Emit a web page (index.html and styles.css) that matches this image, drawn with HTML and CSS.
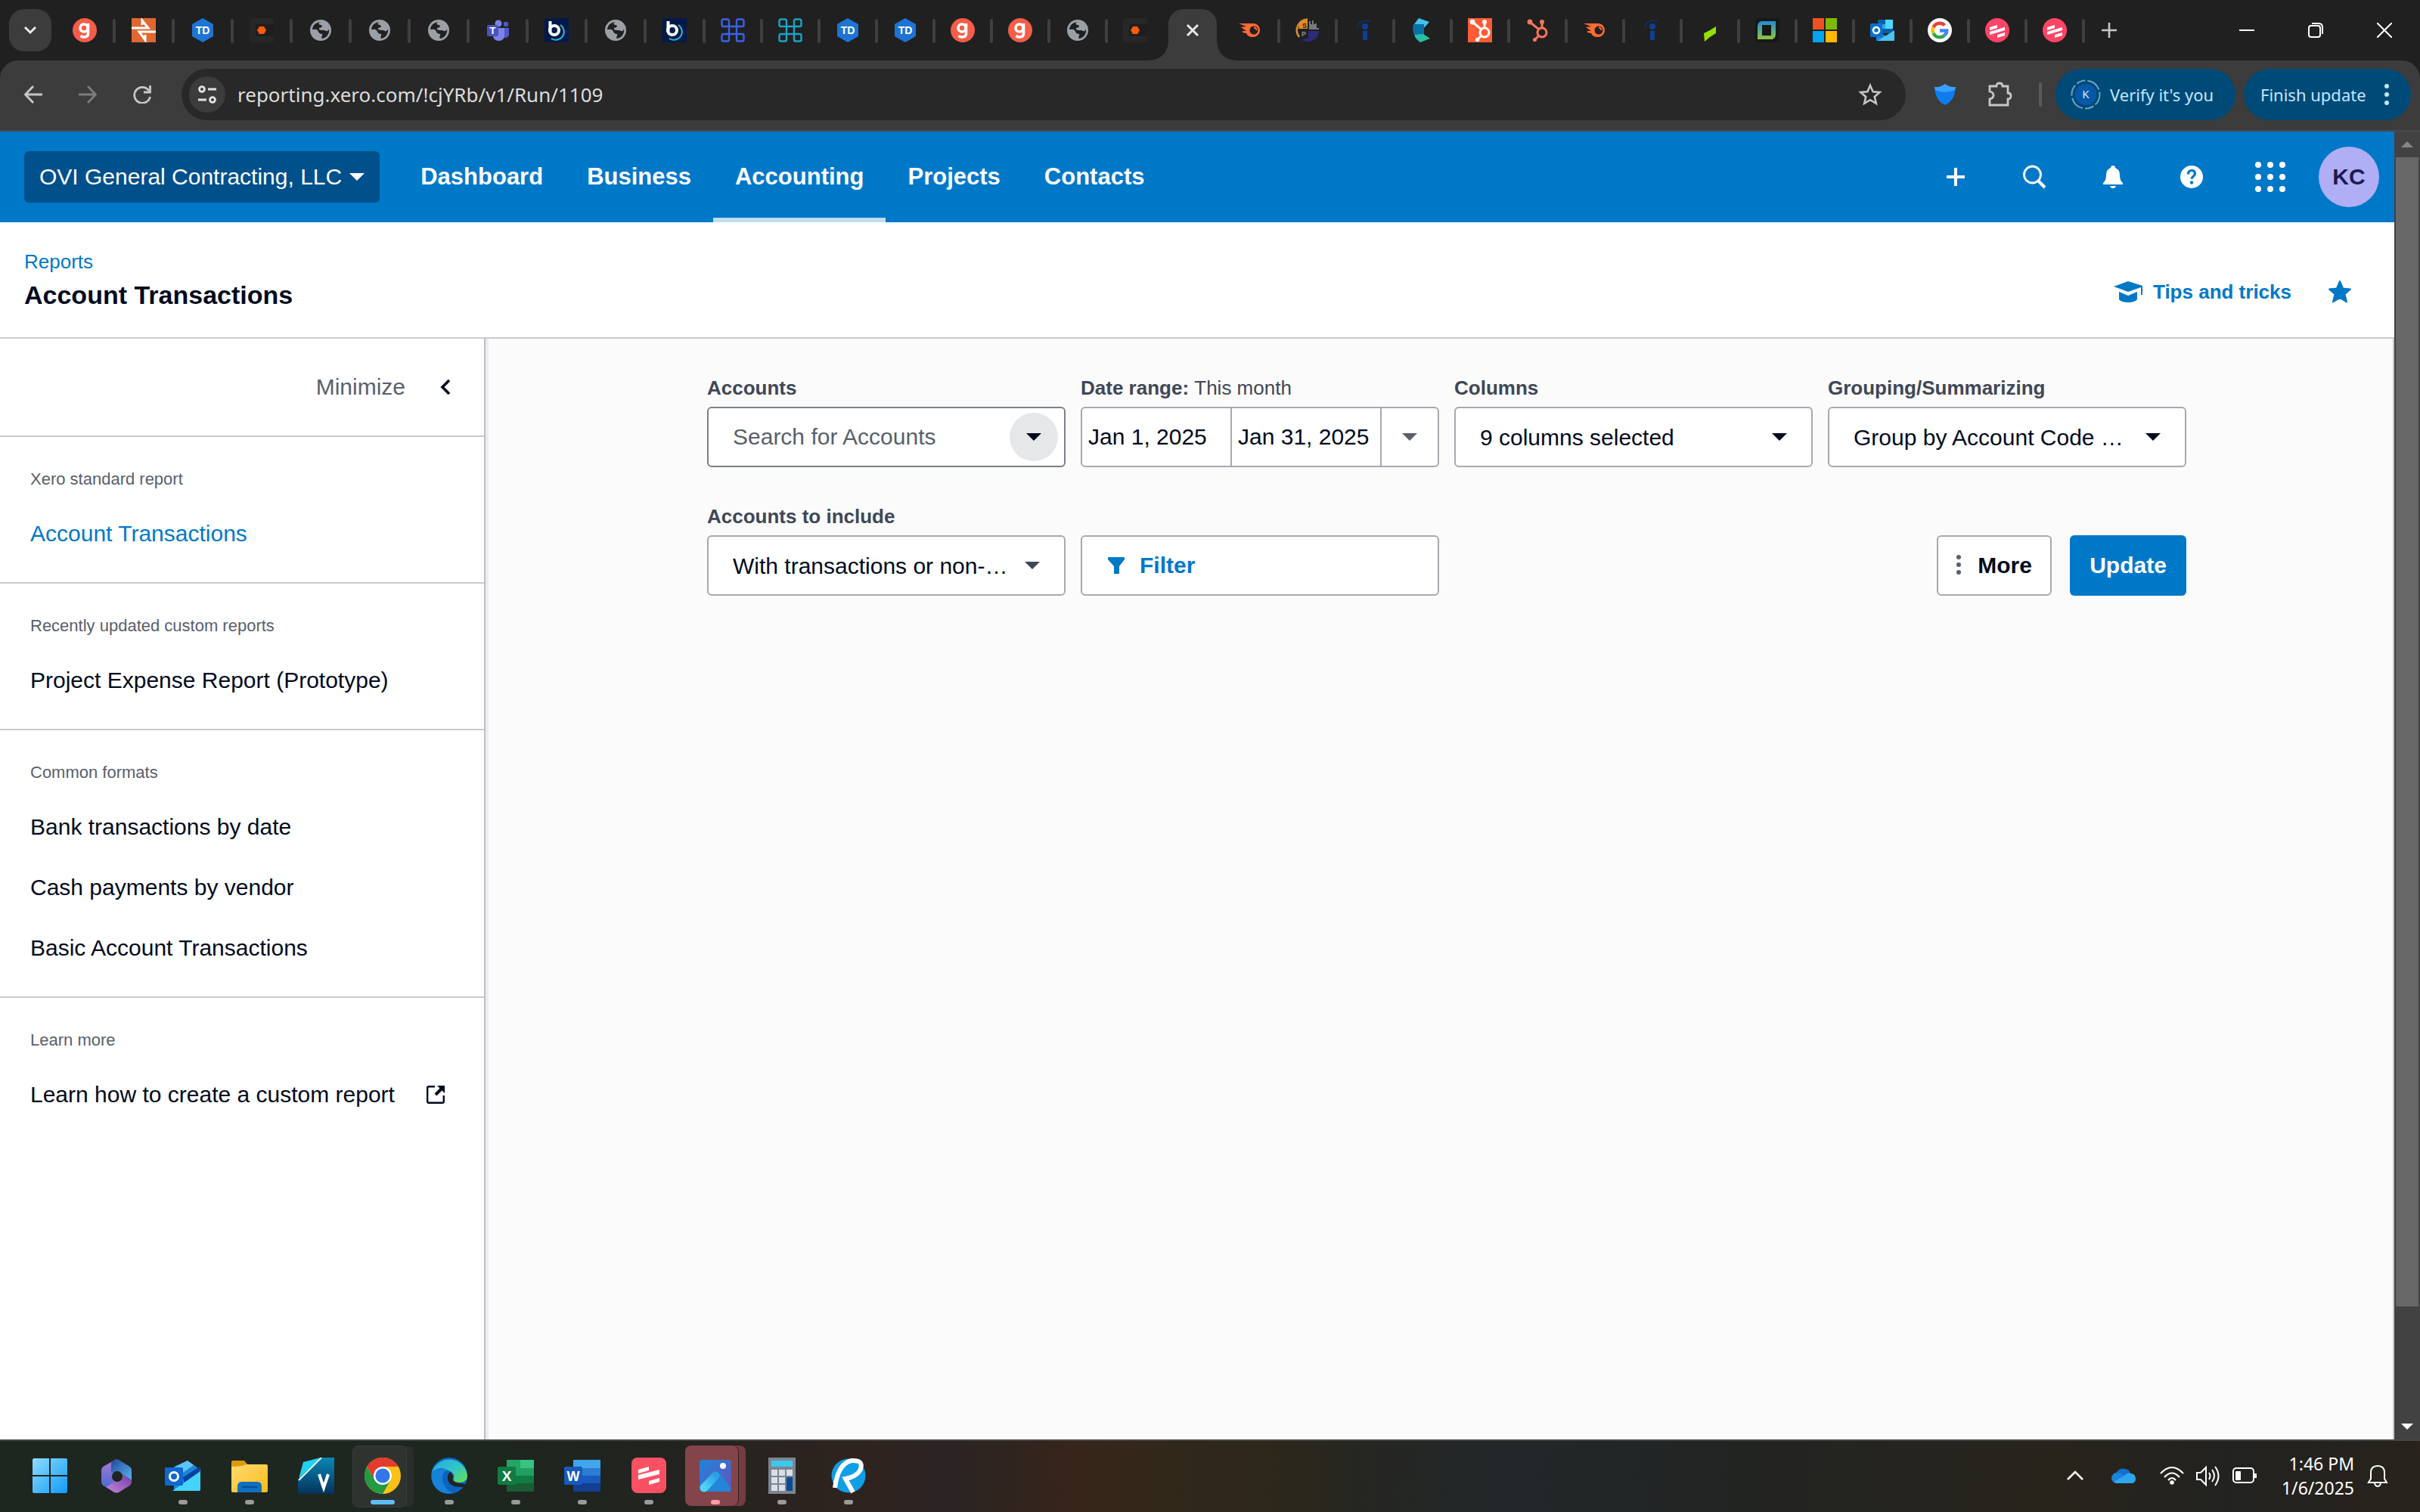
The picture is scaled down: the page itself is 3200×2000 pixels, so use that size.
FILE: index.html
```html
<!DOCTYPE html>
<html lang="en">
<head>
<meta charset="utf-8">
<title>Account Transactions</title>
<link rel="stylesheet" href="styles.css">
</head>
<body>
<svg class="defs" aria-hidden="true">
  <defs>
    <linearGradient id="winG" x1="0" y1="0" x2="1" y2="1"><stop offset="0" stop-color="#8fdcfd"/><stop offset="1" stop-color="#0f9bfa"/></linearGradient>
    <linearGradient id="copA" x1="0" y1="0" x2="0" y2="1"><stop offset="0" stop-color="#b07ad8"/><stop offset="1" stop-color="#3f6ad0"/></linearGradient>
    <linearGradient id="copB" x1="0" y1="0" x2="1" y2="1"><stop offset="0" stop-color="#24479c"/><stop offset="1" stop-color="#58b6ef"/></linearGradient>
    <linearGradient id="copC" x1="0" y1="1" x2="1" y2="0"><stop offset="0" stop-color="#c487e2"/><stop offset="1" stop-color="#6d3f9e"/></linearGradient>
    <linearGradient id="foldG" x1="0" y1="0" x2="1" y2="1"><stop offset="0" stop-color="#ffdc6e"/><stop offset="1" stop-color="#fbbb1c"/></linearGradient>
    <linearGradient id="vG" x1="0" y1="0" x2="0" y2="1"><stop offset="0" stop-color="#0a86b4"/><stop offset="1" stop-color="#04335c"/></linearGradient>
    <linearGradient id="edgeG" x1="0" y1="0" x2="1" y2="1"><stop offset="0" stop-color="#2aa7e0"/><stop offset=".5" stop-color="#30c6c8"/><stop offset="1" stop-color="#6be04a"/></linearGradient>
    <linearGradient id="photoG" x1="0" y1="0" x2="1" y2="1"><stop offset="0" stop-color="#1c86dc"/><stop offset="1" stop-color="#6a4fb8"/></linearGradient>
    <linearGradient id="hillG" x1="0" y1="1" x2="1" y2="0"><stop offset="0" stop-color="#4fd6f7"/><stop offset="1" stop-color="#2aa0e4"/></linearGradient>
    <linearGradient id="sqG" x1="0" y1="0" x2="0" y2="1"><stop offset="0" stop-color="#2488d8"/><stop offset="1" stop-color="#8ec63f"/></linearGradient>
  </defs>
  <symbol id="i-g" viewBox="0 0 32 32"><circle cx="16" cy="16" r="16" fill="#f45d48"/><circle cx="15" cy="13" r="5" fill="none" stroke="#fff" stroke-width="3.6"/><path d="M20.500 7v13q0 5-5 5-3 0-5-1.500" fill="none" stroke="#fff" stroke-width="3.6"/></symbol>
  <symbol id="i-globe" viewBox="0 0 32 32"><circle cx="16" cy="16" r="14" fill="#9aa0a6"/><path fill="#202020" d="M17 5c-5 0-4 4-1 4 4 1 1 4-2 4-1 3 3 3 6 3 3 0 3 2 5 1 2-1 2-3 2-3a11 11 0 0 1-9 13c-2-2 1-4 0-6-3 0-5-2-6-5-2-2-5-1-7-1A11 11 0 0 1 17 5z"/></symbol>
  <symbol id="i-dot" viewBox="0 0 32 32"><rect width="32" height="32" rx="4" fill="#272727"/><path fill="#1e1e1e" d="M8 8h24v16H8z"/><path fill="#ff5a0a" d="M13 11h6l3 5-3 5h-6l-3-5z"/></symbol>
  <symbol id="i-b" viewBox="0 0 32 32"><path fill="#04194a" d="M0 0h32v32H0z"/><path d="M21 9a10 10 0 0 1-12 18" fill="none" stroke="#28b9c8" stroke-width="2"/><path d="M7.500 4v14" stroke="#fff" stroke-width="4"/><circle cx="13" cy="16" r="6" fill="none" stroke="#fff" stroke-width="4"/></symbol>
  <symbol id="i-cmd" viewBox="0 0 32 32"><path d="M11 11V3.500a2 2 0 0 0-2-2H3.500a2 2 0 0 0-2 2V9a2 2 0 0 0 2 2h25a2 2 0 0 0 2-2V3.500a2 2 0 0 0-2-2H23a2 2 0 0 0-2 2v25a2 2 0 0 0 2 2h5.500a2 2 0 0 0 2-2V23a2 2 0 0 0-2-2h-25a2 2 0 0 0-2 2v5.500a2 2 0 0 0 2 2H9a2 2 0 0 0 2-2z" fill="none" stroke="currentColor" stroke-width="2.4"/></symbol>
  <symbol id="i-sem" viewBox="0 0 32 32"><path fill="#ff6a35" d="M1 7h20a9 9 0 1 1-2 18c-5 0-7-3-8-5l-5-1v-2h5L4 12l7-1z"/><circle cx="21" cy="16" r="5.500" fill="#202020"/><path d="M21 12.500a3.500 3.500 0 0 1 3.500 3.500" stroke="#ff6a35" stroke-width="2" fill="none"/></symbol>
  <symbol id="i-i" viewBox="0 0 32 32"><path d="M6 12Q9 1 23 4" fill="none" stroke="#12305f" stroke-width="2"/><circle cx="16" cy="11" r="4" fill="#0d3f96"/><path d="M16 17v12" stroke="#0d3f96" stroke-width="6"/></symbol>
  <symbol id="i-hs" viewBox="0 0 32 32"><g fill="none" stroke="currentColor" stroke-width="3"><circle cx="22" cy="19" r="6"/><path d="M22 6v7M7 6l11 9M13 28l5-5"/></g><g fill="currentColor"><circle cx="22" cy="5" r="3"/><circle cx="6" cy="5" r="3.400"/><circle cx="12.500" cy="28.500" r="2.600"/></g></symbol>
  <symbol id="i-s" viewBox="0 0 32 32"><circle cx="16" cy="16" r="16" fill="#ff4466"/><path fill="#fff" d="M6 12l10-3v4L6 16zM6 18l20-6v4L6 22zM16 22l10-3v4l-10 3z"/></symbol>
</svg>

<div class="tabstrip">
  <button class="tabsearch" aria-label="Search tabs"><svg class="ic20" viewBox="0 0 20 20"><path d="M3 6l7 7 7-7" fill="none" stroke="#e8e8e8" stroke-width="3"/></svg></button>
  <nav class="tabs" aria-label="Open tabs">
    <button class="tab"><svg><use href="#i-g"/></svg></button>
    <button class="tab"><svg viewBox="0 0 32 32"><path fill="#e0672f" d="M0 0h32v32H0z"/><path d="M0 13h22L14 3v6M32 18H10l8 11v-7" fill="none" stroke="#fff" stroke-width="3"/></svg></button>
    <button class="tab"><svg viewBox="0 0 32 32"><path fill="#1d74d4" d="M16 0l14 8v16l-14 8-14-8V8z"/><text x="16" y="21" font-size="14" font-weight="700" text-anchor="middle" fill="#fff">TD</text></svg></button>
    <button class="tab"><svg><use href="#i-dot"/></svg></button>
    <button class="tab"><svg><use href="#i-globe"/></svg></button>
    <button class="tab"><svg><use href="#i-globe"/></svg></button>
    <button class="tab"><svg><use href="#i-globe"/></svg></button>
    <button class="tab"><svg viewBox="0 0 32 32"><circle cx="17" cy="7" r="4.500" fill="#7b83eb"/><circle cx="27" cy="8" r="3.200" fill="#5059c9"/><path fill="#5059c9" d="M23 13h8v9a5 5 0 0 1-8 3z"/><path fill="#7b83eb" d="M10 13h15v9q0 8-7.500 8T10 22z"/><rect x="2" y="9" width="15" height="15" rx="2" fill="#4b53bc"/><text x="9.500" y="21" font-size="13" font-weight="700" text-anchor="middle" fill="#fff">T</text></svg></button>
    <button class="tab"><svg><use href="#i-b"/></svg></button>
    <button class="tab"><svg><use href="#i-globe"/></svg></button>
    <button class="tab"><svg><use href="#i-b"/></svg></button>
    <button class="tab blue"><svg><use href="#i-cmd"/></svg></button>
    <button class="tab cyan"><svg><use href="#i-cmd"/></svg></button>
    <button class="tab"><svg viewBox="0 0 32 32"><path fill="#1d74d4" d="M16 0l14 8v16l-14 8-14-8V8z"/><text x="16" y="21" font-size="14" font-weight="700" text-anchor="middle" fill="#fff">TD</text></svg></button>
    <button class="tab"><svg viewBox="0 0 32 32"><path fill="#1d74d4" d="M16 0l14 8v16l-14 8-14-8V8z"/><text x="16" y="21" font-size="14" font-weight="700" text-anchor="middle" fill="#fff">TD</text></svg></button>
    <button class="tab"><svg><use href="#i-g"/></svg></button>
    <button class="tab"><svg><use href="#i-g"/></svg></button>
    <button class="tab"><svg><use href="#i-globe"/></svg></button>
    <button class="tab bare"><svg><use href="#i-dot"/></svg></button>
    <button class="tab active" aria-label="Close tab"><svg viewBox="0 0 32 32"><path d="M9 9l14 14M23 9L9 23" stroke="#e8e8e8" stroke-width="3"/></svg></button>
    <button class="tab"><svg><use href="#i-sem"/></svg></button>
    <button class="tab"><svg viewBox="0 0 32 32"><path d="M16 1.500A14.500 14.500 0 0 0 5 25" fill="none" stroke="#e08a2c" stroke-width="2.500"/><path fill="#e08a2c" d="M6 5l10-4v13H4z"/><path fill="#77797d" d="M18 4h2v4h2V3h2v5h2v-1h2v6h3v2H18z"/><path fill="#2c2a7a" d="M17 17h14q0 8-7 12T8 29l9-3z"/><text x="12" y="13" font-size="9" font-weight="700" text-anchor="middle" fill="#202020">S</text><text x="11" y="24" font-size="9" font-weight="700" text-anchor="middle" fill="#8d9298">P</text></svg></button>
    <button class="tab"><svg><use href="#i-i"/></svg></button>
    <button class="tab"><svg viewBox="0 0 32 32"><path fill="#41c3ea" d="M11 0l14 5-8 9-12-6z"/><path fill="#0a6fa5" d="M4 8l14 0v16L5 22Q2 15 4 8z"/><path fill="#27bfa2" d="M5 22l12-1 9 6-13 5Q7 28 5 22z"/></svg></button>
    <button class="tab hub"><svg><use href="#i-hs"/></svg></button>
    <button class="tab coral"><svg><use href="#i-hs"/></svg></button>
    <button class="tab"><svg><use href="#i-sem"/></svg></button>
    <button class="tab"><svg><use href="#i-i"/></svg></button>
    <button class="tab"><svg viewBox="0 0 32 32"><path fill="#96e000" d="M8 20l8-4 8-5v9l-8 5-7 6z"/></svg></button>
    <button class="tab"><svg viewBox="0 0 32 32"><rect width="32" height="32" rx="3" fill="#181818"/><path d="M27 4v18q-1 6-6 6H3V10q1-6 6-6z" fill="url(#sqG)"/><path fill="#181818" d="M9 9h12v14H9z"/></svg></button>
    <button class="tab"><svg viewBox="0 0 32 32"><path fill="#f25022" d="M0 0h15v15H0z"/><path fill="#7fba00" d="M17 0h15v15H17z"/><path fill="#00a4ef" d="M0 17h15v15H0z"/><path fill="#ffb900" d="M17 17h15v15H17z"/></svg></button>
    <button class="tab"><svg viewBox="0 0 32 32"><path fill="#0a5ea8" d="M10 2h20v18H10z"/><path fill="#28a8ea" d="M10 8h10v6H10z"/><path fill="#50d9ff" d="M20 2h10v12H20z"/><path fill="#1a86d8" d="M8 16l24 14H8z"/><path fill="#4cc3f1" d="M32 16v14H10z"/><rect y="7" width="16" height="18" rx="2" fill="#0a6fcf"/><circle cx="8" cy="16" r="4" fill="none" stroke="#fff" stroke-width="2.600"/></svg></button>
    <button class="tab"><svg viewBox="0 0 32 32"><circle cx="16" cy="16" r="16" fill="#fff"/><g fill="none" stroke-width="4.400"><path stroke="#ea4335" d="M7.500 12A9.300 9.300 0 0 1 22.500 9.500"/><path stroke="#fbbc05" d="M7.500 20a9.300 9.300 0 0 1 0-8"/><path stroke="#34a853" d="M7.500 20A9.300 9.300 0 0 0 22 23"/><path stroke="#4285f4" d="M22 23q3.300-3 3.300-6.500H16"/></g></svg></button>
    <button class="tab"><svg><use href="#i-s"/></svg></button>
    <button class="tab"><svg><use href="#i-s"/></svg></button>
  </nav>
  <button class="newtab" aria-label="New tab"><svg class="ic20" viewBox="0 0 20 20"><path d="M10 0v20M0 10h20" stroke="#c8c8c8" stroke-width="2.600"/></svg></button>
  <div class="winctl">
    <button aria-label="Minimize window"><svg class="ic20" viewBox="0 0 20 20"><path d="M0 10h20" stroke="#fff" stroke-width="2"/></svg></button>
    <button aria-label="Restore window"><svg class="ic20" viewBox="0 0 20 20"><rect x="1" y="4" width="15" height="15" rx="3" fill="none" stroke="#fff" stroke-width="2"/><path d="M5 1h9q5 0 5 5v9" fill="none" stroke="#fff" stroke-width="2"/></svg></button>
    <button aria-label="Close window"><svg class="ic20" viewBox="0 0 20 20"><path d="M0 0l20 20M20 0L0 20" stroke="#fff" stroke-width="2"/></svg></button>
  </div>
</div>

<div class="toolbar-bg">
<div class="toolbar">
  <button class="nav-btn" aria-label="Back"><svg class="ic24" viewBox="0 0 24 24"><path d="M24 12H2M12 1L1.500 12 12 23" fill="none" stroke="#c7c7c7" stroke-width="2.800"/></svg></button>
  <button class="nav-btn" aria-label="Forward"><svg class="ic24" viewBox="0 0 24 24"><path d="M0 12h22M12 1l10.500 11L12 23" fill="none" stroke="#7c7c7c" stroke-width="2.800"/></svg></button>
  <button class="nav-btn" aria-label="Reload"><svg class="ic24" viewBox="0 0 24 24"><path d="M21 7a10.500 10.500 0 1 0 1.500 8M22.500 0v9H14" fill="none" stroke="#c7c7c7" stroke-width="2.800"/></svg></button>
  <div class="omnibox">
    <span class="site"><svg class="ic24" viewBox="0 0 24 24"><g fill="none" stroke="#e3e3e3" stroke-width="2.800"><circle cx="5" cy="5" r="3.400"/><path d="M13 5h11M0 19h11"/><circle cx="19" cy="19" r="3.400"/></g></svg></span>
    <input type="text" aria-label="Address" value="reporting.xero.com/!cjYRb/v1/Run/1109">
    <button aria-label="Bookmark this tab"><svg class="ic32" viewBox="0 0 32 32"><path d="M16 4l3.600 8.200 9 .8-6.800 6 2 8.800L16 23.200 8.200 27.800l2-8.800-6.800-6 9-.8z" fill="none" stroke="#c7c7c7" stroke-width="2.600"/></svg></button>
  </div>
  <button class="ext" aria-label="Shield extension"><svg class="ic32" viewBox="0 0 32 32"><path fill="#0f7bf0" d="M2 6q8 1 14-4 6 5 14 4-1 18-14 24Q3 24 2 6z"/><path fill="#39a0ff" d="M2 6q8 1 14-4 6 5 14 4l-1 4q-14 6-26 0z"/></svg></button>
  <button class="ext" aria-label="Extensions"><svg class="ic36" viewBox="0 0 36 36"><path d="M5 7h9q0-4 4-4t4 4h7v9q4 0 4 4t-4 4v8H5v-8q5-1 5-5t-5-5z" fill="none" stroke="#c7c7c7" stroke-width="2.800"/></svg></button>
  <span class="bar"></span>
  <button class="pill verify"><svg class="ic40" viewBox="0 0 40 40"><circle cx="20" cy="20" r="18.500" fill="none" stroke="#6aa3c8" stroke-width="2" stroke-dasharray="15 3 12 3 20 3"/><circle cx="20" cy="20" r="14" fill="#0658a8"/><text x="20" y="25" font-size="15" text-anchor="middle" fill="#d8ecff">K</text></svg>Verify it's you</button>
  <button class="pill finish">Finish update<svg class="dots" viewBox="0 0 6 28"><g fill="#c2e7ff"><circle cx="3" cy="3" r="3"/><circle cx="3" cy="14" r="3"/><circle cx="3" cy="25" r="3"/></g></svg></button>
</div>
</div>

<div class="viewport">
  <div class="page">
    <header class="xhead">
      <button class="org">OVI General Contracting, LLC<svg class="caret" viewBox="0 0 20 10"><path fill="#fff" d="M0 0h20L10 10z"/></svg></button>
      <nav class="xnav">
        <a href="#">Dashboard</a><a href="#">Business</a><a href="#" class="on">Accounting</a><a href="#">Projects</a><a href="#">Contacts</a>
      </nav>
      <div class="xicons">
        <button aria-label="Create new"><svg class="ic24" viewBox="0 0 24 24"><path d="M12 0v24M0 12h24" stroke="#fff" stroke-width="4"/></svg></button>
        <button aria-label="Search"><svg class="ic32" viewBox="0 0 32 32"><circle cx="13.500" cy="13" r="11" fill="none" stroke="#fff" stroke-width="2.800"/><path d="M20.500 20.500l9.500 9.500" stroke="#fff" stroke-width="4"/></svg></button>
        <button aria-label="Notifications"><svg class="ic32" viewBox="0 0 32 32"><path fill="#fff" d="M16 1q3 0 3 3 6 2 6 10 0 7 4 10v2H3v-2q4-3 4-10 0-8 6-10 0-3 3-3zM12 28h8q-1 3-4 3t-4-3z"/></svg></button>
        <button aria-label="Help"><svg class="ic32" viewBox="0 0 32 32"><circle cx="16" cy="16" r="15" fill="#fff"/><path d="M11.500 12.500q0-5 4.500-5t4.500 4.200c0 3.500-4.500 3.500-4.500 7" fill="none" stroke="#0078c8" stroke-width="3.200"/><circle cx="16" cy="23.500" r="2.200" fill="#0078c8"/></svg></button>
        <button aria-label="Apps"><svg class="ic40" viewBox="0 0 40 40"><g fill="#fff"><circle cx="4" cy="4" r="4"/><circle cx="20" cy="4" r="4"/><circle cx="36" cy="4" r="4"/><circle cx="4" cy="20" r="4"/><circle cx="20" cy="20" r="4"/><circle cx="36" cy="20" r="4"/><circle cx="4" cy="36" r="4"/><circle cx="20" cy="36" r="4"/><circle cx="36" cy="36" r="4"/></g></svg></button>
        <button aria-label="Account"><span class="avatar">KC</span></button>
      </div>
    </header>

    <div class="title">
      <div>
        <a href="#" class="crumb">Reports</a>
        <h1>Account Transactions</h1>
      </div>
      <div class="title-actions">
        <a href="#" class="tips"><svg class="cap" viewBox="0 0 38 28"><path fill="#0078c8" d="M19 0l19 6v12h-2V8l-17 6L0 7zM7 14l12 5 12-5v10q-3 4-12 4T7 24z"/></svg>Tips and tricks</a>
        <button class="fav" aria-label="Favorite"><svg class="ic32" viewBox="0 0 32 32"><path fill="#0078c8" stroke="#0078c8" stroke-width="2" stroke-linejoin="round" d="M16 2l4 9.500 10 1-7.500 6.500 2.500 10.500-9-5.500-9 5.500L9.500 19 2 12.500l10-1z"/></svg></button>
      </div>
    </div>

    <div class="body">
      <aside class="side">
        <button class="mini">Minimize<svg class="chev" viewBox="0 0 14 20"><path d="M12 1L3 10l9 9" fill="none" stroke="#000a1e" stroke-width="3.600"/></svg></button>
        <section><h2>Xero standard report</h2><a href="#" class="cur">Account Transactions</a></section>
        <section><h2>Recently updated custom reports</h2><a href="#">Project Expense Report (Prototype)</a></section>
        <section><h2>Common formats</h2><a href="#">Bank transactions by date</a><a href="#">Cash payments by vendor</a><a href="#">Basic Account Transactions</a></section>
        <section><h2>Learn more</h2><a href="#">Learn how to create a custom report<svg class="ic24" viewBox="0 0 24 24"><path d="M11 1.200H3Q1.200 1.200 1.200 3v18q0 1.800 1.800 1.800h18q1.800 0 1.800-1.800v-8" fill="none" stroke="#000a1e" stroke-width="2.400"/><path d="M12 12l8-8" stroke="#000a1e" stroke-width="4"/><path fill="#000a1e" d="M14 0h10v10z"/></svg></a></section>
      </aside>

      <main class="main">
        <form class="filters">
          <div class="field">
            <label for="acc">Accounts</label>
            <div class="box dark"><input id="acc" type="text" placeholder="Search for Accounts"><button type="button" class="round" aria-label="Open accounts"><svg class="caret" viewBox="0 0 20 10"><path fill="#000a1e" d="M0 0h20L10 10z"/></svg></button></div>
          </div>
          <div class="field">
            <label for="from">Date range: <span>This month</span></label>
            <div class="box dates"><input id="from" type="text" value="Jan 1, 2025"><input type="text" aria-label="To" value="Jan 31, 2025"><button type="button" aria-label="Choose date range"><svg class="caret" viewBox="0 0 20 10"><path fill="#59606d" d="M0 0h20L10 10z"/></svg></button></div>
          </div>
          <div class="field">
            <label for="cols">Columns</label>
            <div class="box pick"><select id="cols"><option>9 columns selected</option></select><svg class="caret" viewBox="0 0 20 10"><path fill="#000a1e" d="M0 0h20L10 10z"/></svg></div>
          </div>
          <div class="field">
            <label for="grp">Grouping/Summarizing</label>
            <div class="box pick"><select id="grp"><option>Group by Account Code …</option></select><svg class="caret" viewBox="0 0 20 10"><path fill="#000a1e" d="M0 0h20L10 10z"/></svg></div>
          </div>
          <div class="field">
            <label for="inc">Accounts to include</label>
            <div class="box pick"><select id="inc"><option>With transactions or non-…</option></select><svg class="caret" viewBox="0 0 20 10"><path fill="#404756" d="M0 0h20L10 10z"/></svg></div>
          </div>
          <button type="button" class="box filter"><svg class="funnel" viewBox="0 0 22 22"><path fill="#0078c8" d="M0 0h22v3l-7 9v10H8V12L0 3z"/></svg>Filter</button>
          <div class="actions">
            <button type="button" class="box more"><svg class="dots" viewBox="0 0 6 28"><g fill="#59606d"><circle cx="3" cy="3" r="3"/><circle cx="3" cy="13" r="3"/><circle cx="3" cy="23" r="3"/></g></svg>More</button>
            <button type="button" class="update">Update</button>
          </div>
        </form>
      </main>
    </div>
  </div>
  <div class="scroll" aria-hidden="true">
    <svg class="sarrow" viewBox="0 0 16 8"><path fill="#868686" d="M0 8h16L8 0z"/></svg>
    <div class="track"><div class="thumb"></div></div>
    <svg class="sarrow" viewBox="0 0 16 8"><path fill="#fff" d="M0 0h16L8 8z"/></svg>
  </div>
</div>

<footer class="taskbar">
  <div class="apps">
    <button class="app idle" aria-label="Start"><svg viewBox="0 0 48 48"><path fill="url(#winG)" d="M1 3q0-2 2-2h20v22H1zM25 1h20q2 0 2 2v20H25zM1 25h22v22H3q-2 0-2-2zM25 25h22v20q0 2-2 2H25z"/></svg></button>
    <button class="app idle" aria-label="Microsoft 365"><svg viewBox="0 0 48 48"><path fill="url(#copA)" d="M24 2L8 11q-4 2-4 6v15q0 4 4 6l8 4 8-12V2z"/><path fill="url(#copB)" d="M17 6l4-3q3-2 6 0l13 8q4 2 4 6v14L30 22l-13-2z"/><path fill="url(#copC)" d="M10 39l18-12 4-5 10 6q2 1 2 4 0 4-4 6l-13 8q-3 1-6 0z"/><circle cx="25" cy="25" r="7" fill="#1f2520"/></svg></button>
    <button class="app" aria-label="Outlook"><svg viewBox="0 0 48 48"><path fill="#1b86d8" d="M12 12L30 4l17 12v26q0 2-2 2H12z"/><path fill="#5ec4f5" d="M14 12L30 4l8 6-20 14z"/><path fill="#0b3f9c" d="M24 26l22-14v8L26 34z"/><path fill="#45d3fb" d="M10 44l37-26v24q0 2-2 2z"/><rect y="13" width="24" height="24" rx="2" fill="#1068d0"/><circle cx="12" cy="25" r="5.500" fill="none" stroke="#fff" stroke-width="3"/></svg></button>
    <button class="app" aria-label="File Explorer"><svg viewBox="0 0 48 48"><path fill="#dd9a0d" d="M0 6q0-2 2-2h15l5 6v6H0z"/><path fill="url(#foldG)" d="M0 12q8 0 13-1l7-2h26q2 0 2 2v33q0 2-2 2H2q-2 0-2-2z"/><path fill="#1070c0" d="M8 46V38q0-6 6-6h20q6 0 6 6v8z"/><path d="M14 39h20" stroke="#0a4f94" stroke-width="2.500"/></svg></button>
    <button class="app idle" aria-label="V application"><svg viewBox="0 0 48 48"><path fill="url(#vG)" d="M30 0h18v48H0V30z"/><path fill="#1fd3ee" d="M7 6L30 0 1 28z"/><path d="M31 0L1 30" stroke="#e8fbff" stroke-width="2"/><path d="M28 22l6 18 6-18" fill="none" stroke="#fff" stroke-width="4"/></svg></button>
    <button class="app stack chrome" aria-label="Chrome"><svg viewBox="0 0 48 48"><circle cx="24" cy="24" r="24" fill="#fbc116"/><path fill="#e33b2e" d="M3.200 12a24 24 0 0 1 41.600 0H24L13.600 30z"/><path fill="#249a41" d="M3.200 12a24 24 0 0 0 20.800 36L34.400 30 24 36 13.600 30z"/><circle cx="24" cy="24" r="12" fill="#fff"/><circle cx="24" cy="24" r="9.600" fill="#3278ea"/></svg></button>
    <button class="app" aria-label="Edge"><svg viewBox="0 0 48 48"><circle cx="24" cy="24" r="24" fill="#0c63c0"/><path fill="url(#edgeG)" d="M1 20A24 24 0 0 1 48 24q0 8-9 9-10 0-9-4 2-8-5-11Q8 10 1 20z"/><path fill="#1583d8" d="M1 20q8-10 20-4-10 8-4 20 4 8 12 11-18 3-26-12-3-7-2-15z"/><path fill="#202320" d="M25 19q6 4 3 10 3 5 12 5l6 2q2-3 2-3v6l-8 0q-16 0-18-10-1-6 3-10z"/></svg></button>
    <button class="app" aria-label="Excel"><svg viewBox="0 0 48 48"><path fill="#27a366" d="M12 3h18v11H12z"/><path fill="#37c481" d="M30 3h18v11H30z"/><path fill="#22a062" d="M12 14h36v10H12z"/><path fill="#107c41" d="M12 24h36v10H12z"/><path fill="#1a5c36" d="M12 34h36v11H12z"/><rect y="12" width="24" height="24" rx="2" fill="#107c41"/><text x="12" y="31" font-size="19" font-weight="700" text-anchor="middle" fill="#fff">X</text></svg></button>
    <button class="app" aria-label="Word"><svg viewBox="0 0 48 48"><path fill="#42a5ee" d="M12 3h36v11H12z"/><path fill="#2b7cd3" d="M12 14h36v10H12z"/><path fill="#185abd" d="M12 24h36v10H12z"/><path fill="#123f92" d="M12 34h36v11H12z"/><rect y="12" width="24" height="24" rx="2" fill="#185abd"/><text x="12" y="31" font-size="18" font-weight="700" text-anchor="middle" fill="#fff">W</text></svg></button>
    <button class="app" aria-label="S application"><svg viewBox="0 0 48 48"><rect x="1" width="46" height="47" rx="8" fill="#fa5064"/><path fill="#fff" d="M10 16l14-4v5l-14 4zM10 23l28-7v6l-28 7zM24 31l14-4v5l-14 4z"/></svg></button>
    <button class="app stack photos" aria-label="Photos"><svg viewBox="0 0 48 48"><rect x="3" y="3" width="42" height="42" rx="4" fill="url(#photoG)"/><circle cx="34" cy="11" r="4" fill="#fff"/><path fill="#2585d8" d="M22 22q4-5 8-1l15 20q-1 4-4 4H12z"/><path d="M9 40l15-16" stroke="url(#hillG)" stroke-width="11" stroke-linecap="round"/></svg></button>
    <button class="app" aria-label="Calculator"><svg viewBox="0 0 48 48"><path fill="#7c858f" d="M6 0h36v48H6z"/><path fill="#3ec8f0" d="M10 4h28v8H10z"/><path fill="#d8dfe8" d="M10 16h8v8h-8zM20 16h8v8h-8zM30 16h8v8h-8zM10 26h8v8h-8zM20 26h8v8h-8zM10 36h8v8h-8zM20 36h8v8h-8z"/><path fill="#0b4a96" d="M30 26h8v18h-8z"/></svg></button>
    <button class="app" aria-label="R application"><svg viewBox="0 0 48 48"><circle cx="24" cy="24" r="22.500" fill="#0f9fe4"/><path d="M6 40Q10 8 28 4q16-1 12 11-4 10-20 13l10 18" fill="none" stroke="#fff" stroke-width="6"/></svg></button>
  </div>
  <div class="tray">
    <svg class="ic24" viewBox="0 0 24 24"><path d="M2 17L12 7l10 10" fill="none" stroke="#fff" stroke-width="2.600"/></svg>
    <svg class="ic32" viewBox="0 0 32 32"><path fill="#0f6fd0" d="M6 13q4-8 12-6 6 1 7 6l-8 8z"/><path fill="#1a83dc" d="M6 12q6-1 12 5l-14 8q-4-2-4-6 1-6 6-7z"/><path fill="#2fa5ee" d="M3 24l14-8q4-5 9-3 6 1 6 7t-6 6H7q-3 0-4-2z"/></svg>
    <svg class="ic32" viewBox="0 0 32 32"><g fill="none" stroke="#fff" stroke-width="2.200"><path d="M1 13q15-16 30 0M6 18q10-11 20 0M11 22q5-6 10 0"/></g><circle cx="16" cy="25" r="2.800" fill="#fff"/></svg>
    <svg class="ic32" viewBox="0 0 32 32"><g fill="none" stroke="#fff" stroke-width="2"><path d="M1 12h5l7-7v23l-7-7H1zM17 12q3 4 0 9M21 8q6 8 0 16M25 4q9 12 0 25"/></g></svg>
    <svg class="ic32" viewBox="0 0 32 32"><rect x="1" y="6" width="27" height="19" rx="4" fill="none" stroke="#fff" stroke-width="2"/><rect x="4" y="10" width="7" height="12" rx="1" fill="#fff"/><path fill="#fff" d="M28 13h4v6h-4z"/></svg>
    <div class="clock"><time>1:46 PM</time><time>1/6/2025</time></div>
    <svg class="ic32" viewBox="0 0 32 32"><path d="M16 3q9 0 9 9v8l3 5H4l3-5v-8q0-9 9-9zM12 26q1 4 4 4t4-4" fill="none" stroke="#fff" stroke-width="2"/></svg>
  </div>
</footer>
</body>
</html>
```
FILE: styles.css
```css
* { box-sizing: border-box; }
body {
  margin: 0;
  min-height: 100vh;
  display: flex;
  flex-direction: column;
  font-family: "Liberation Sans", Arial, sans-serif;
  font-size: 30px;
  color: #000a1e;
  background: #202020;
}
button, input, select { font: inherit; color: inherit; border: 0; background: none; padding: 0; margin: 0; }
input, select { min-width: 0; outline: 0; }
button { display: flex; align-items: center; justify-content: center; cursor: pointer; }
a { text-decoration: none; color: inherit; }
svg { display: block; flex: none; }
.defs { position: absolute; width: 0; height: 0; }
.ic20 { width: 20px; height: 20px; }
.ic24 { width: 24px; height: 24px; }
.ic32 { width: 32px; height: 32px; }
.ic36 { width: 36px; height: 36px; }
.ic40 { width: 40px; height: 40px; }
.caret { width: 20px; height: 10px; }
.dots { width: 6px; height: 28px; }

/* Browser tab strip */
.tabstrip { display: flex; align-items: center; height: 80px; padding: 0 2px 0 12px; background: #202020; }
.tabsearch { width: 56px; height: 56px; border-radius: 20px; background: #3c3c3c; }
.tabs { display: flex; margin-left: 5px; height: 80px; }
.tab { position: relative; width: 76px; height: 80px; }
.tab:nth-child(-n+11) { width: 78px; }
.tab svg { width: 32px; height: 32px; }
.tab::after { content: ""; position: absolute; right: -2px; top: 25px; width: 4px; height: 32px; border-radius: 2px; background: #3f3f3f; }
.tab.bare::after { display: none; }
.tab.blue { color: #3a62e8; }
.tab.cyan { color: #1ba3c9; }
.tab.coral { color: #f8765a; }
.tab.hub { color: #fff; }
.tab.hub svg { background: #ff5c35; }
.tab.active { z-index: 1; }
.tab.active::before { content: ""; position: absolute; z-index: -1; left: 6px; right: 6px; top: 12px; bottom: 0; border-radius: 20px 20px 0 0; background: #3c3c3c; }
.tab.active::after {
  z-index: -1; left: -18px; right: -18px; top: auto; bottom: 0; width: auto; height: 24px; border-radius: 0;
  background:
    radial-gradient(circle at 0 0, transparent 23px, #3c3c3c 24px) left / 24px 24px no-repeat,
    radial-gradient(circle at 100% 0, transparent 23px, #3c3c3c 24px) right / 24px 24px no-repeat;
}
.newtab { width: 68px; height: 80px; }
.winctl { display: flex; margin-left: auto; }
.winctl button { width: 91px; height: 80px; }

/* Browser toolbar */
.toolbar-bg { background: #202020; }
.toolbar { display: flex; align-items: center; height: 94px; padding: 0 12px 2px 8px; border-radius: 24px 24px 0 0; background: #3c3c3c; border-bottom: 2px solid #48494a; font-family: "Noto Sans", "Open Sans", sans-serif; font-size: 22px; color: #c2e7ff; }
.nav-btn { width: 72px; height: 68px; }
.omnibox { flex: 1; display: flex; align-items: center; height: 68px; margin-left: 16px; padding: 0 31px 0 10px; border-radius: 34px; background: #282828; color: #dcdcdc; font-size: 26px; }
.omnibox input { flex: 1; margin-left: 16px; }
.site { display: grid; place-items: center; width: 48px; height: 48px; border-radius: 50%; background: #3c3c3c; }
.ext { width: 72px; height: 68px; }
.omnibox + .ext { margin-left: 16px; }
.bar { width: 4px; height: 32px; margin: 0 18px 0 16px; border-radius: 2px; background: #5a5a5a; }
.pill { height: 68px; border-radius: 34px; background: #004a77; white-space: nowrap; }
.verify { justify-content: flex-start; width: 238px; padding-left: 20px; gap: 12px; }
.finish { justify-content: space-between; width: 221px; margin-left: 11px; padding: 0 29px 0 22px; }

/* Web page area */
.viewport { flex: 1; display: flex; background: #424242; }
.page { flex: 1; min-width: 0; display: flex; flex-direction: column; background: #fff; }
.xhead { display: flex; align-items: center; height: 120px; padding: 0 8px 0 32px; background: #0078c8; color: #fff; }
.org { height: 68px; padding: 0 20px; gap: 10px; border-radius: 6px; background: #00508c; white-space: nowrap; }
.xnav { display: flex; margin-left: 25px; font-size: 31px; font-weight: 700; }
.xnav a { height: 120px; line-height: 120px; padding: 0 29px; }
.xnav .on { box-shadow: inset 0 -6px #bfdef2; }
.xicons { display: flex; margin-left: auto; }
.xicons button { width: 104px; height: 120px; }
.avatar { display: grid; place-items: center; width: 80px; height: 80px; border-radius: 50%; background: #b0aef5; color: #1e1a52; font-weight: 700; }

.title { display: flex; justify-content: space-between; align-items: flex-start; height: 154px; padding: 36px 56px 0 32px; border-bottom: 2px solid #c8cacc; }
.crumb { display: block; font-size: 26px; line-height: 32px; color: #0078c8; }
h1 { margin: 8px 0 0; font-size: 34px; line-height: 40px; }
.title-actions { display: flex; align-items: center; gap: 48px; height: 40px; margin-top: 36px; }
.tips { display: flex; align-items: center; gap: 14px; font-size: 26px; font-weight: 700; color: #0078c8; }
.cap { width: 38px; height: 28px; }

.body { flex: 1; display: flex; }
.side { width: 642px; border-right: 2px solid #babdc4; background: #fff; }
.mini { justify-content: flex-end; width: 100%; height: 130px; padding: 0 44px 0 0; gap: 46px; color: #59606d; border-bottom: 2px solid #c8cacc; }
.chev { width: 14px; height: 20px; }
.side section { padding: 40px 40px 24px; border-bottom: 2px solid #c8cacc; }
.side section:last-child { border-bottom: 0; }
.side h2 { margin: 0 0 16px; font-size: 22px; font-weight: 400; line-height: 32px; color: #59606d; }
.side section a { display: flex; align-items: center; gap: 42px; height: 80px; white-space: nowrap; }
.side section .cur { color: #0078c8; }

.main { flex: 1; padding: 49px 0 0 16px; border-left: 4px solid #ebecf0; border-right: 2px solid #c8cacc; background: #fbfbfb; }
.filters { display: grid; grid-template-columns: repeat(4, 474px); gap: 49px 20px; align-items: end; justify-content: center; }
.field { display: flex; flex-direction: column; gap: 9px; min-width: 0; }
label { font-size: 26px; font-weight: 700; line-height: 32px; color: #404756; }
label span { font-weight: 400; }
.box { display: flex; align-items: center; height: 80px; border: 2px solid #a6a9b0; border-radius: 6px; background: #fff; }
.dark { border-color: #7b808a; padding: 0 8px 0 32px; }
.dark input { flex: 1; }
.dark input::placeholder { color: #59606d; opacity: 1; }
.round { width: 64px; height: 64px; border-radius: 50%; background: #e6e7e9; }
.dates input { width: 198px; height: 76px; padding-left: 8px; border-right: 2px solid #a6a9b0; }
.dates button { flex: 1; height: 76px; }
.pick { padding: 0 32px; }
.pick select { flex: 1; appearance: none; height: 76px; }
.filter { justify-content: flex-start; padding-left: 34px; gap: 20px; font-weight: 700; color: #0078c8; }
.funnel { width: 22px; height: 22px; }
.actions { grid-column: 4; display: flex; justify-content: flex-end; gap: 24px; font-weight: 700; }
.more { width: 152px; gap: 22px; }
.update { width: 154px; height: 80px; border-radius: 6px; background: #0078c8; color: #fff; }

/* Scroll bar */
.scroll { width: 34px; display: flex; flex-direction: column; align-items: center; }
.sarrow { width: 16px; height: 8px; margin: 13px 0; }
.track { flex: 1; display: flex; flex-direction: column; width: 30px; }
.thumb { flex: 32; background: #686868; }
.track::after { content: ""; flex: 3; }

/* Taskbar */
.taskbar {
  display: flex; justify-content: space-between; height: 96px; padding: 0 40px 2px 22px; border-top: 2px solid #454745;
  background: linear-gradient(90deg, #1e2620 0, #1d261f 20%, #22231f 28%, #30231f 36%, #2a2424 39%, #38251a 44.500%, #30281a 49%, #2e281a 52%, #262621 56%, #22272a 62%, #222422 72%, #28241c 85%, #222220 92%, #28231c 100%);
}
.apps { display: flex; }
.app { position: relative; width: 88px; height: 92px; }
.app svg { position: relative; width: 48px; height: 48px; }
.app::after { content: ""; position: absolute; left: 38px; bottom: 8px; width: 12px; height: 6px; border-radius: 3px; background: #9a9a9a; }
.idle::after { display: none; }
.stack::before { content: ""; position: absolute; left: 4px; top: 6px; width: 70px; height: 80px; border-radius: 8px; }
.chrome::before { background: #2e332f; box-shadow: 10px 0 0 -1px #2a2e2b; border: 1px solid #383d39; }
.chrome::after { left: 28px; width: 32px; background: #60bdf3; }
.photos::before { background: #83454a; box-shadow: 1px 0 #30201f, 10px 0 #733c40; }
.photos::after { background: #ff9ba6; }
.tray { display: flex; align-items: center; color: #fff; font-family: "Noto Sans", "Open Sans", sans-serif; font-size: 23px; }
.tray .ic24 { margin-right: 36px; }
.tray .ic32 { margin-right: 16px; }
.tray .ic24 + .ic32 { margin-right: 32px; }
.clock { display: flex; flex-direction: column; width: 113px; margin-right: 15px; line-height: 32px; text-align: right; }
.tray .clock + .ic32 { margin-right: 0; }
```
